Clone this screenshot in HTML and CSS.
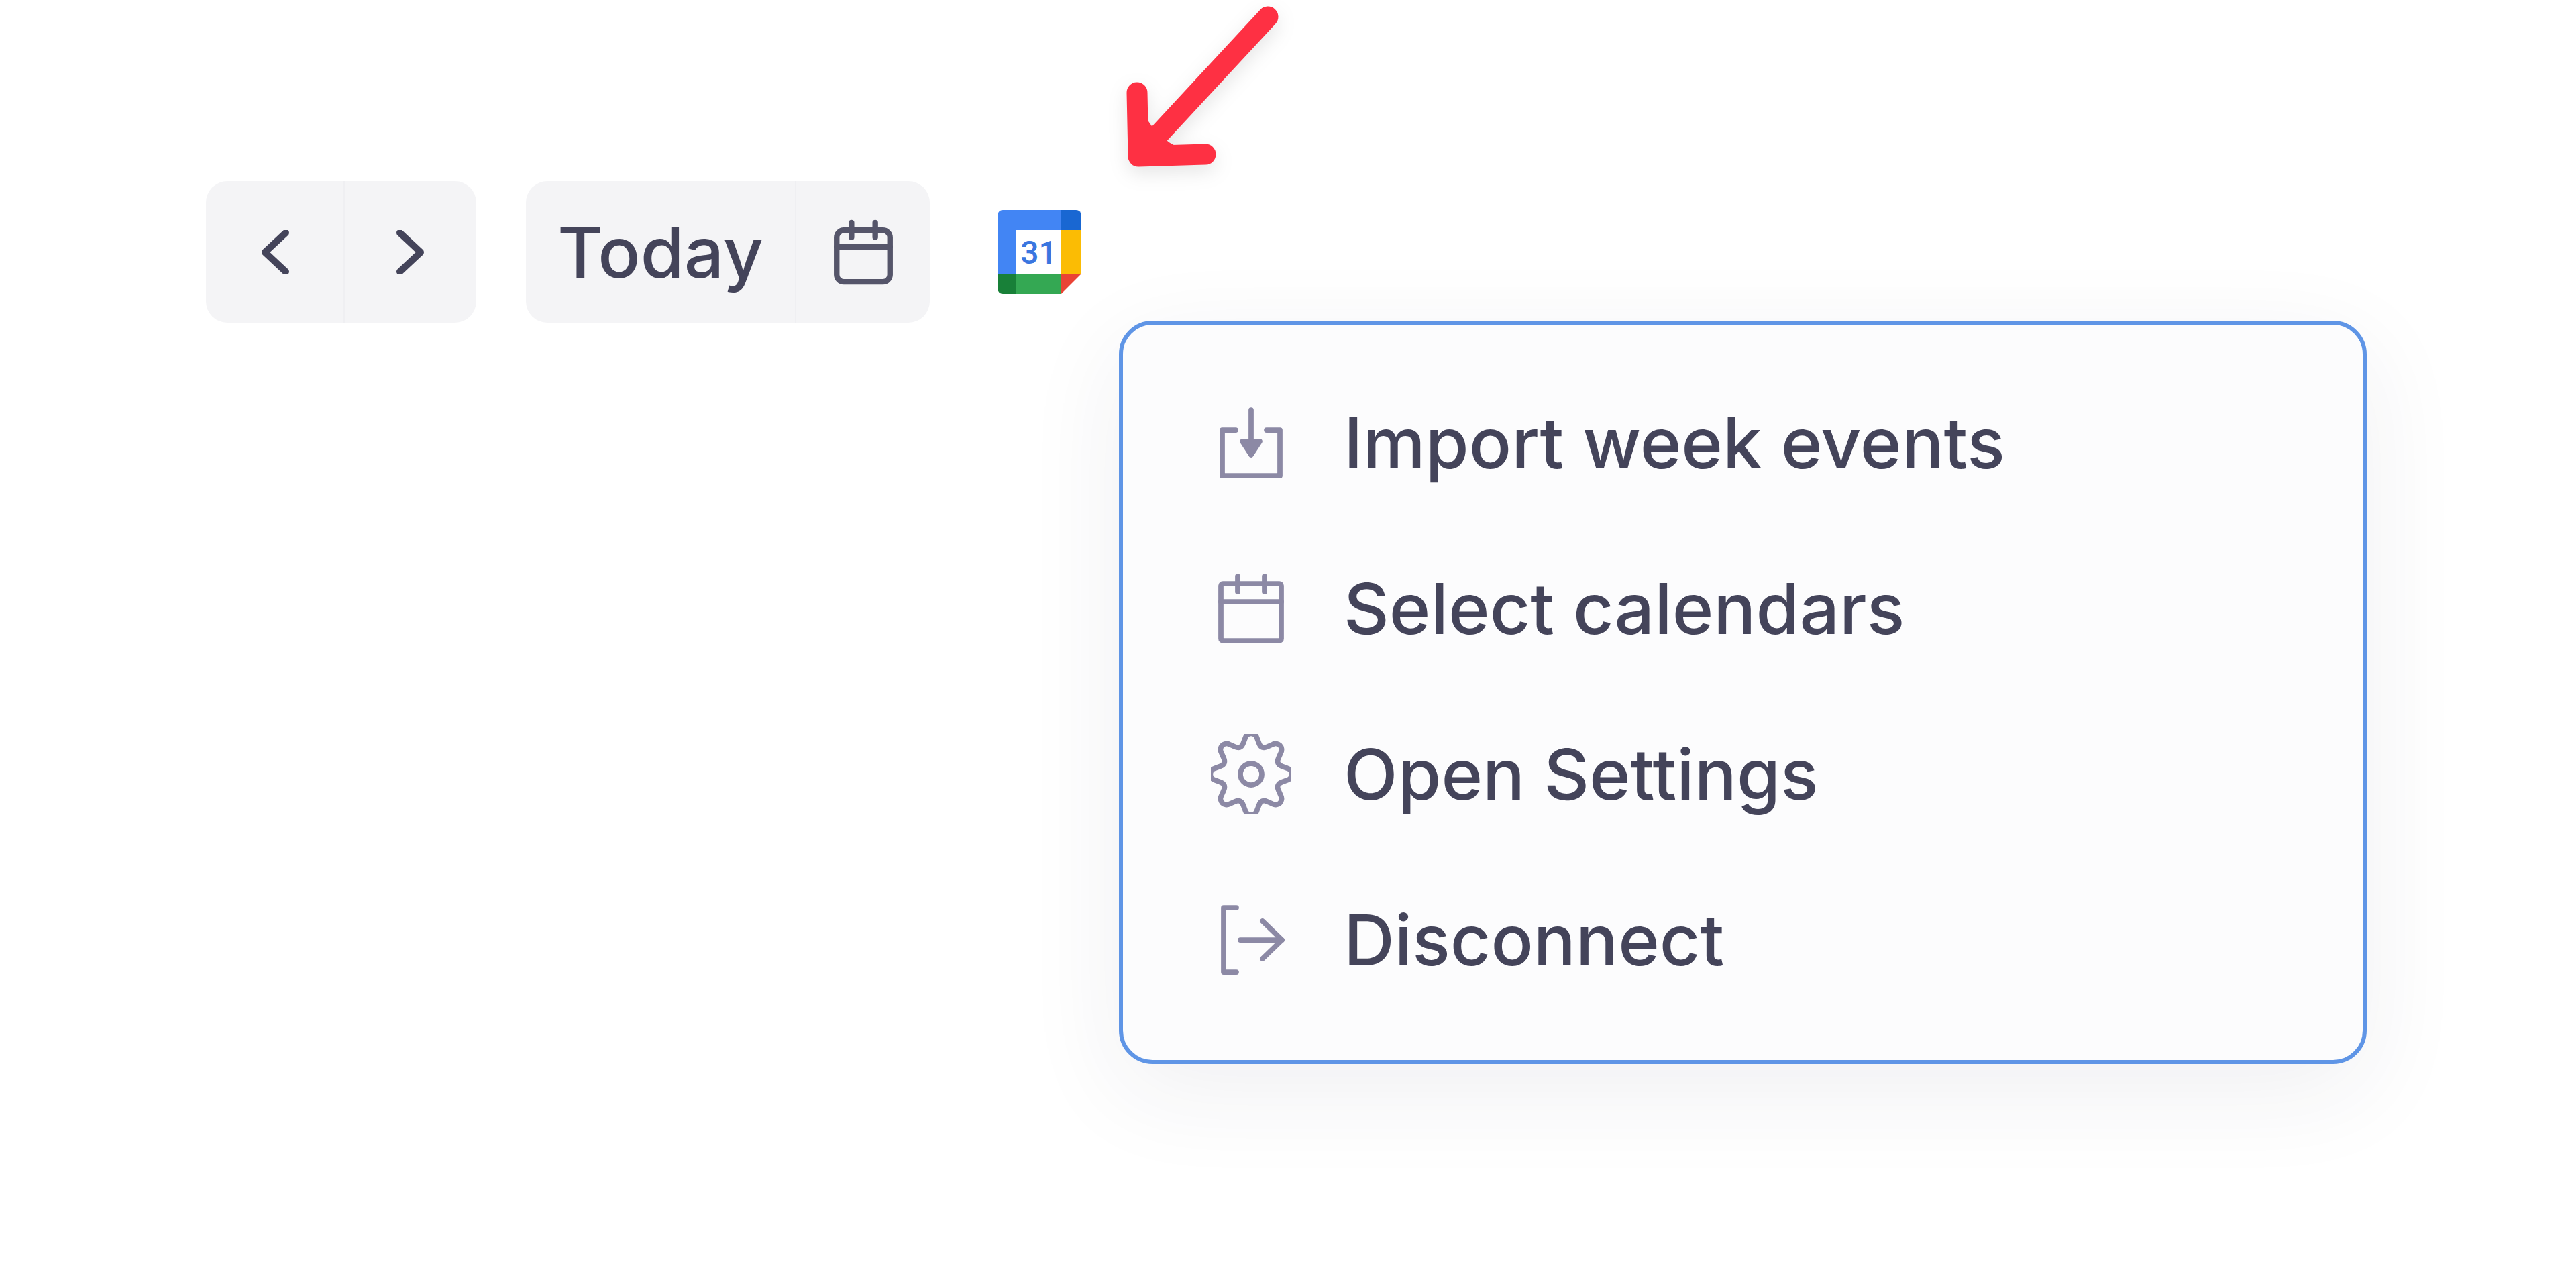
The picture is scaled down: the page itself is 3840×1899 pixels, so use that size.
FILE: index.html
```html
<!DOCTYPE html>
<html lang="en">
<head>
<meta charset="utf-8">
<title>Calendar toolbar</title>
<link rel="stylesheet" href="styles.css">
</head>
<body>
<div class="toolbar">
  <div class="group">
    <button class="btn btn-prev" type="button">
      <svg class="chev" viewBox="0 0 44 66"><path d="M38 4 7 33l31 29"/></svg>
    </button>
    <button class="btn btn-next" type="button">
      <svg class="chev" viewBox="0 0 44 66"><path d="M6 4l31 29L6 62"/></svg>
    </button>
  </div>
  <div class="group">
    <button class="btn btn-today" type="button">Today</button>
    <button class="btn btn-cal" type="button">
      <svg class="icon icon-dark" viewBox="0 0 24 24"><rect x="3" y="4.600" width="18" height="17.400" rx="2.400"/><path d="M3 10.200h18M8 2v5M16 2v5"/></svg>
    </button>
  </div>
  <svg class="gcal" viewBox="0 0 125 125">
    <rect x="28" y="30" width="67" height="65" fill="#fff"/>
    <path d="M8 0h87v30H28v65H0V8a8 8 0 0 1 8-8z" fill="#4285f4"/>
    <path d="M95 0h22a8 8 0 0 1 8 8v22H95z" fill="#1967d2"/>
    <rect x="95" y="30" width="30" height="65" fill="#fbbc04"/>
    <rect x="28" y="95" width="67" height="30" fill="#34a853"/>
    <path d="M0 95h28v30H8a8 8 0 0 1-8-8z" fill="#188038"/>
    <path d="M95 95h30l-30 30z" fill="#ea4335"/>
    <text class="gcal-num" x="61.500" y="80" text-anchor="middle">31</text>
  </svg>
</div>

<svg class="arrow" viewBox="0 0 300 270">
  <path class="arrow-wedge" d="M39 233 37 160 62 196 84 214 114 231z"/>
  <path d="M232 25 39 233M37 138l2 95 100-3"/>
</svg>

<div class="menu">
  <div class="row">
    <svg class="icon" viewBox="0 0 24 24"><path d="M7.400 8.200H3.400v13.600h17.200V8.200h-4"/><path d="M12 2.200v12"/><path class="solid" d="M9.400 11.600h5.200L12 15.600z"/></svg>
    <span class="label">Import week events</span>
  </div>
  <div class="row">
    <svg class="icon" viewBox="0 0 24 24"><rect x="3" y="4.600" width="18" height="17" rx="0.600"/><path d="M3 10h18M8 2.400v4.600M16 2.400v4.600"/></svg>
    <span class="label">Select calendars</span>
  </div>
  <div class="row">
    <svg class="icon" viewBox="0 0 24 24"><path d="M10.280 1.130A1.800 1.800 0 0 1 13.720 1.130L14.390 2.870Q15.060 4.610 16.770 3.850L18.470 3.100A1.800 1.800 0 0 1 20.900 5.530L20.150 7.230Q19.390 8.940 21.130 9.610L22.870 10.280A1.800 1.800 0 0 1 22.870 13.720L21.130 14.390Q19.390 15.060 20.150 16.770L20.900 18.470A1.800 1.800 0 0 1 18.470 20.900L16.770 20.150Q15.060 19.390 14.390 21.130L13.720 22.870A1.800 1.800 0 0 1 10.280 22.870L9.610 21.130Q8.940 19.390 7.230 20.150L5.530 20.900A1.800 1.800 0 0 1 3.100 18.470L3.850 16.770Q4.610 15.060 2.870 14.390L1.130 13.720A1.800 1.800 0 0 1 1.130 10.280L2.870 9.610Q4.610 8.940 3.850 7.230L3.100 5.530A1.800 1.800 0 0 1 5.530 3.100L7.230 3.850Q8.940 4.610 9.610 2.870Z"/><circle cx="12" cy="12" r="3.200"/></svg>
    <span class="label">Open Settings</span>
  </div>
  <div class="row">
    <svg class="icon" viewBox="0 0 24 24"><path d="M7.600 2.400H3.800v19.200h3.800"/><path d="M8.800 12h12.400M15.400 6.400l5.800 5.600-5.800 5.600"/></svg>
    <span class="label">Disconnect</span>
  </div>
</div>
</body>
</html>
```

FILE: styles.css
```css
* {
  box-sizing: border-box;
}

html,
body {
  margin: 0;
  height: 100%;
  background: #fff;
  overflow: hidden;
}

body {
  font-family: Inter, "Liberation Sans", sans-serif;
  color: #44445a;
}

.toolbar {
  display: flex;
  align-items: center;
  gap: 74px;
  padding: 270px 0 0 307px;
}

.group {
  display: flex;
  height: 211px;
  border-radius: 32px;
  background: #f4f4f6;
  overflow: hidden;
}

.btn {
  display: flex;
  align-items: center;
  justify-content: center;
  height: 100%;
  padding: 0;
  border: 0;
  background: transparent;
  color: inherit;
  font: inherit;
  font-size: 105px;
  font-weight: 450;
}

.btn + .btn {
  border-left: 2px solid #efeff2;
}

.btn-prev {
  width: 205px;
}

.btn-next {
  width: 198px;
}

.btn-today {
  width: 401px;
}

.btn-cal {
  width: 201px;
}

.chev {
  width: 44px;
  height: 66px;
  fill: none;
  stroke: #44445a;
  stroke-width: 10;
  stroke-linecap: round;
  stroke-linejoin: round;
}

.icon {
  flex: none;
  width: 120px;
  height: 120px;
  fill: none;
  stroke: #8c89a5;
  stroke-width: 1.550;
  stroke-linecap: round;
  stroke-linejoin: round;
}

.icon-dark {
  width: 106px;
  height: 106px;
  stroke: #55556a;
  stroke-width: 1.900;
}

.solid {
  fill: #8c89a5;
}

.gcal {
  width: 125px;
  height: 125px;
  margin-left: 27px;
}

.gcal-num {
  fill: #3a76e0;
  font-family: Roboto, sans-serif;
  font-size: 48px;
  font-weight: 500;
}

.arrow {
  position: absolute;
  left: 1658px;
  top: 0;
  width: 300px;
  height: 270px;
  fill: none;
  stroke: #fe3043;
  stroke-width: 31;
  stroke-linecap: round;
  stroke-linejoin: round;
  filter: drop-shadow(0 10px 14px rgba(0, 0, 0, 0.1));
}

.arrow-wedge {
  fill: #fe3043;
  stroke-width: 4;
}

.menu {
  position: absolute;
  left: 1668px;
  top: 478px;
  width: 1860px;
  height: 1108px;
  padding: 52px 0 0 131px;
  border: 6px solid #5f95e6;
  border-radius: 50px;
  background: #fcfcfd;
  box-shadow: 0 40px 150px rgba(40, 40, 70, 0.07);
}

.row {
  display: flex;
  align-items: center;
  gap: 78px;
  height: 247px;
}

.label {
  font-size: 105px;
  font-weight: 450;
  color: #44445a;
}
```
